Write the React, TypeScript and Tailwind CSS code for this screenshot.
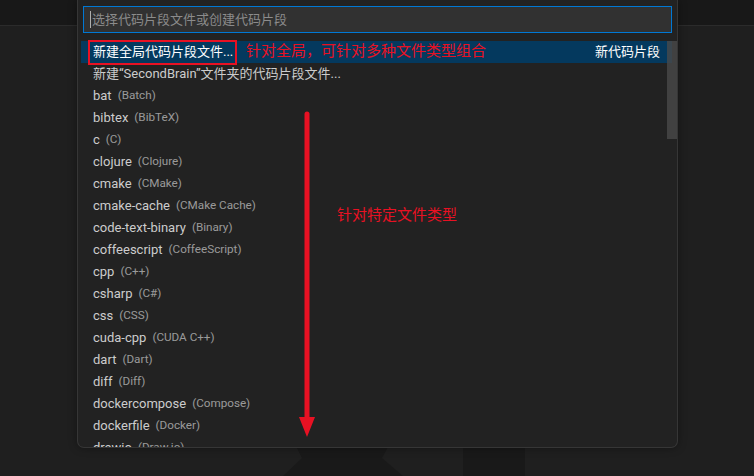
import React from 'react';

const font = { fontFamily: '"Segoe UI", Roboto, "Noto Sans CJK SC", sans-serif' };

const items: { label: string; desc?: string }[] = [
  { label: '新建“SecondBrain”文件夹的代码片段文件...' },
  { label: 'bat', desc: '(Batch)' },
  { label: 'bibtex', desc: '(BibTeX)' },
  { label: 'c', desc: '(C)' },
  { label: 'clojure', desc: '(Clojure)' },
  { label: 'cmake', desc: '(CMake)' },
  { label: 'cmake-cache', desc: '(CMake Cache)' },
  { label: 'code-text-binary', desc: '(Binary)' },
  { label: 'coffeescript', desc: '(CoffeeScript)' },
  { label: 'cpp', desc: '(C++)' },
  { label: 'csharp', desc: '(C#)' },
  { label: 'css', desc: '(CSS)' },
  { label: 'cuda-cpp', desc: '(CUDA C++)' },
  { label: 'dart', desc: '(Dart)' },
  { label: 'diff', desc: '(Diff)' },
  { label: 'dockercompose', desc: '(Compose)' },
  { label: 'dockerfile', desc: '(Docker)' },
  { label: 'drawio', desc: '(Draw.io)' },
];

function Row({ label, desc }: { label: string; desc?: string }) {
  return (
    <div className="flex h-[22px] items-center px-[12px] text-[13px] text-[#cccccc] whitespace-nowrap">
      <span>{label}</span>
      {desc && <span className="ml-[6px] text-[11.7px] opacity-70">{desc}</span>}
    </div>
  );
}

export default function App() {
  return (
    <div className="relative h-[476px] w-[754px] overflow-hidden bg-[#1f1f1f]" style={font}>
      {/* title/tab strip */}
      <div className="h-[26px] border-b border-[#2b2b2b] bg-[#181818]" />

      {/* watermark peeking under the quick pick */}
      <svg className="absolute left-0 top-0" width="754" height="476">
        <polygon points="293,440 392,440 382,458 403,476 283,476 302,458" fill="#191919" />
        <rect x="463" y="440" width="62" height="36" fill="#191919" />
      </svg>

      {/* quick pick */}
      <div className="absolute left-[77px] top-0 flex h-[448px] w-[601px] flex-col rounded-b-[7px] border border-t-0 border-[#363636] bg-[#222222] shadow-[0_0_8px_rgba(0,0,0,0.36)]">
        <div className="px-[5px] pt-[6px]">
          <div className="flex h-[27px] items-center border border-[#0078d4] bg-[#313131] pl-[6px]">
            <div className="h-[17px] w-px bg-[#aeafad]" />
            <span className="ml-px text-[13px] text-[#8b8b8b]">选择代码片段文件或创建代码片段</span>
          </div>
        </div>

        <div className="relative mt-[8px] flex-1 overflow-hidden pl-[3px] pr-[5px]">
          <div className="flex h-[22px] items-center justify-between bg-[#04395e] px-[12px] text-[13px] text-white whitespace-nowrap">
            <span>新建全局代码片段文件...</span>
            <span>新代码片段</span>
          </div>
          {items.map((it) => (
            <Row key={it.label} label={it.label} desc={it.desc} />
          ))}
          <div className="absolute right-0 top-0 h-[98px] w-[10px] bg-[#4a4a4a]/80" />
        </div>
      </div>

      {/* annotations */}
      <div className="absolute left-[88px] top-[40px] h-[25px] w-[149px] border-2 border-[#e81123]" />
      <span className="absolute left-[246px] top-[40px] text-[15px] leading-[22px] text-[#e81123]">
        针对全局，可针对多种文件类型组合
      </span>
      <span className="absolute left-[337px] top-[204px] text-[15px] leading-[22px] text-[#e81123]">
        针对特定文件类型
      </span>
      <svg className="absolute left-0 top-0" width="754" height="476">
        <line x1="307" y1="114" x2="307" y2="422" stroke="#e81123" strokeWidth="5" strokeLinecap="round" />
        <polygon points="299,417 315,417 307,437" fill="#e81123" />
      </svg>
    </div>
  );
}
